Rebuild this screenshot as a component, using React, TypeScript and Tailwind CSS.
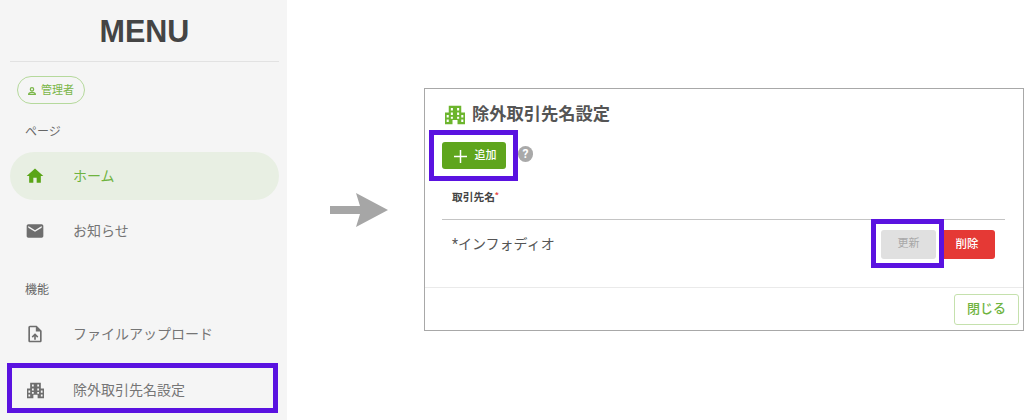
const jp = "font-['Roboto','Noto_Sans_CJK_JP',sans-serif]";

function Icon({ d, className }: { d: string; className: string }) {
  return (
    <svg viewBox="0 0 24 24" fill="currentColor" fillRule="evenodd" className={className}>
      <path d={d} />
    </svg>
  );
}

const HOME = "M10 20v-6h4v6h5v-8h3L12 3 2 12h3v8z";
const MAIL = "M20 4H4c-1.1 0-1.99.9-1.99 2L2 18c0 1.1.9 2 2 2h16c1.1 0 2-.9 2-2V6c0-1.1-.9-2-2-2zm0 4l-8 5-8-5V6l8 5 8-5v2z";
const UPLOAD = "M14 2H6c-1.1 0-1.99.9-1.99 2L4 20c0 1.1.89 2 1.99 2H18c1.1 0 2-.9 2-2V8l-6-6zm4 18H6V4h7v5h5v11zM8 15.01l1.41 1.41L11 14.84V19h2v-4.16l1.59 1.59L16 15.01 12.01 11z";
const CITY = "M4.5 1h15v8H24v14h-9v-5H9v5H0V9h4.5zM7 3.5v3h2.5v-3zM14.5 3.5v3H17v-3zM7 9v3h2.5V9zM14.5 9v3H17V9zM2 12v3h2.5v-3zM19.5 12v3H22v-3zM7 14.2v2.3h2.5v-2.3zM14.5 14.2v2.3H17v-2.3zM2 17.5v3h2.5v-3zM19.5 17.5v3H22v-3z";

function NavRow({ icon, label, active, cls, small }: { icon: string; label: string; active?: boolean; cls: string; small?: boolean }) {
  return (
    <div className={`ml-[10px] mr-[8px] flex items-center pl-[15px] h-[48px] rounded-[24px] ${cls} ${active ? "bg-[#e8efe3] text-[#6fb33f]" : "text-[#757575]"}`}>
      <span className="w-[20px] h-[20px] flex items-center justify-center">
        <Icon d={icon} className={`${small ? "w-[17px] h-[17px]" : "w-[20px] h-[20px]"} ${active ? "text-[#5aa517]" : "text-[#6e6e6e]"}`} />
      </span>
      <span className="ml-[28px] text-[14px]">{label}</span>
    </div>
  );
}

export default function App() {
  return (
    <div className={`relative flex w-[1024px] h-[420px] overflow-hidden bg-white ${jp}`}>
      <aside className="w-[287px] h-full bg-[#f5f5f5] flex flex-col shrink-0">
        <div className="ml-[10px] mr-[8px] h-[62px] pt-[3px] border-b border-[#e2e2e2] flex items-center justify-center font-['Liberation_Sans',sans-serif] font-bold text-[30.5px] text-[#444444]">
          MENU
        </div>
        <div className="mt-[14px] ml-[17px] w-[68px] h-[28px] rounded-full border border-[#b5d99c] flex items-center pl-[9px] pt-[2px] text-[#7ab648] text-[11px]">
          <svg viewBox="0 0 24 24" className="w-[10px] h-[10px] mr-[4px]" fill="none" stroke="currentColor" strokeWidth="3">
            <circle cx="12" cy="8" r="4" />
            <path d="M4 20c0-4 4-5 8-5s8 1 8 5z" />
          </svg>
          管理者
        </div>
        <div className="mt-[19px] ml-[25px] text-[12px] leading-[18px] text-[#666666]">ページ</div>
        <NavRow icon={HOME} label="ホーム" active cls="mt-[11px]" />
        <NavRow icon={MAIL} label="お知らせ" cls="mt-[7px]" />
        <div className="mt-[26px] ml-[25px] text-[12px] leading-[18px] text-[#666666]">機能</div>
        <NavRow icon={UPLOAD} label="ファイルアップロード" cls="mt-[11px]" />
        <NavRow icon={CITY} label="除外取引先名設定" cls="mt-[8px]" small />
      </aside>

      <div className="ml-[43px] mt-[193px] w-[58px] h-[34px] shrink-0 text-[#a6a6a6]">
        <svg viewBox="0 0 58 34" className="w-[58px] h-[34px]" fill="currentColor">
          <path d="M0 13h30L26 0l32 17-32 17 4-13H0z" />
        </svg>
      </div>

      <main className="ml-[36px] mt-[88px] w-[600px] h-[243px] border border-[#a8a8a8] shrink-0 flex flex-col">
        <div className="flex items-center pt-[10px] pl-[20px] h-[41px]">
          <Icon d={CITY} className="w-[20px] h-[20px] text-[#6cb52d]" />
          <span className="ml-[7px] text-[17.25px] font-bold text-[#555555]">除外取引先名設定</span>
        </div>
        <div className="flex items-center ml-[17px] mt-[12px] h-[27px]">
          <button className="w-[64px] h-[27px] pl-[2px] pt-[1px] rounded-[3px] bg-[#5fa51d] text-white flex items-center justify-center text-[11px] font-medium">
            <svg viewBox="0 0 14 14" className="w-[13px] h-[13px] mr-[8px]" fill="none" stroke="currentColor" strokeWidth="1.6">
              <path d="M7 0v14M0 7h14" />
            </svg>
            追加
          </button>
          <span className="ml-[12px] mb-[3px] w-[15px] h-[16px] rounded-full bg-[#a9a9a9] text-white text-[12px] font-bold flex items-center justify-center">?</span>
        </div>
        <div className="ml-[27px] mt-[22px] text-[10.75px] font-bold text-[#444444] leading-[14px]">
          取引先名<sup className="text-[#e53935] text-[8px]">*</sup>
        </div>
        <div className="ml-[17px] mr-[18px] mt-[14px] border-t border-[#c4c4c4] flex items-center h-[50px] pl-[10px] pr-[10px] text-[14px] text-[#555555]">
          <span>*インフォディオ</span>
          <button className="ml-auto w-[55px] h-[29px] rounded-[3px] bg-[#e0e0e0] text-[#a8a8a8] text-[11px]">更新</button>
          <button className="ml-[3px] w-[56px] h-[29px] rounded-[3px] bg-[#e53935] text-white text-[11.5px] font-medium">削除</button>
        </div>
        <div className="mt-auto border-t border-[#eaeaea] h-[43px] flex items-center justify-end pr-[4px]">
          <button className="w-[65px] h-[31px] rounded-[3px] border border-[#c5e1ad] text-[#6fb33f] text-[13px] font-medium">閉じる</button>
        </div>
      </main>

      <div className="absolute left-[7px] top-[363px] w-[271px] h-[50px] border-[5px] border-[#5a12e0]" />
      <div className="absolute left-[429px] top-[130px] w-[89px] h-[51px] border-[5px] border-[#5a12e0]" />
      <div className="absolute left-[871px] top-[219px] w-[73px] h-[49px] border-[5px] border-[#5a12e0]" />
    </div>
  );
}
